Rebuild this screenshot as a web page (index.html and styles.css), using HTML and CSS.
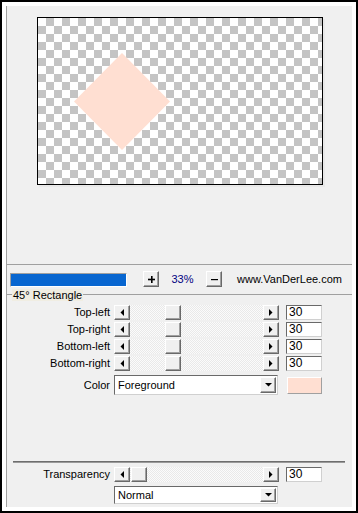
FILE: index.html
```html
<!DOCTYPE html>
<html>
<head>
<meta charset="utf-8">
<link rel="stylesheet" href="styles.css">
</head>
<body>
<div class="window">
  <div class="panel">
    <div class="preview">
      <div class="canvas">
        <svg width="284" height="166" viewBox="0 0 284 166"><polygon points="84,35 132,83.5 84,132 36,83.5" fill="#ffdfd2"/></svg>
      </div>
    </div>
    <div class="toolbar">
      <div class="progress"></div>
      <div class="btn plus"><svg width="7" height="7" viewBox="0 0 7 7"><rect x="3" y="0" width="1.6" height="7" fill="#000"/><rect x="0" y="2.7" width="7" height="1.6" fill="#000"/></svg></div>
      <span class="zoom">33%</span>
      <div class="btn minus"><svg width="7" height="7" viewBox="0 0 7 7"><rect x="0" y="3" width="7" height="1.2" fill="#000"/></svg></div>
      <span class="url">www.VanDerLee.com</span>
    </div>
    <div class="group-head"><span class="group-title">45° Rectangle</span></div>
    <div class="rows">
      <div class="row">
        <span class="lbl">Top-left</span>
        <div class="slider">
          <div class="abtn"><svg width="4" height="7" viewBox="0 0 4 7"><polygon points="4,0 4,7 0.5,3.5" fill="#000"/></svg></div>
          <div class="track"><div class="thumb" style="margin-left:35px"></div></div>
          <div class="abtn"><svg width="4" height="7" viewBox="0 0 4 7"><polygon points="0,0 0,7 3.5,3.5" fill="#000"/></svg></div>
        </div>
        <div class="val">30</div>
      </div>
      <div class="row">
        <span class="lbl">Top-right</span>
        <div class="slider">
          <div class="abtn"><svg width="4" height="7" viewBox="0 0 4 7"><polygon points="4,0 4,7 0.5,3.5" fill="#000"/></svg></div>
          <div class="track"><div class="thumb" style="margin-left:35px"></div></div>
          <div class="abtn"><svg width="4" height="7" viewBox="0 0 4 7"><polygon points="0,0 0,7 3.5,3.5" fill="#000"/></svg></div>
        </div>
        <div class="val">30</div>
      </div>
      <div class="row">
        <span class="lbl">Bottom-left</span>
        <div class="slider">
          <div class="abtn"><svg width="4" height="7" viewBox="0 0 4 7"><polygon points="4,0 4,7 0.5,3.5" fill="#000"/></svg></div>
          <div class="track"><div class="thumb" style="margin-left:35px"></div></div>
          <div class="abtn"><svg width="4" height="7" viewBox="0 0 4 7"><polygon points="0,0 0,7 3.5,3.5" fill="#000"/></svg></div>
        </div>
        <div class="val">30</div>
      </div>
      <div class="row">
        <span class="lbl">Bottom-right</span>
        <div class="slider">
          <div class="abtn"><svg width="4" height="7" viewBox="0 0 4 7"><polygon points="4,0 4,7 0.5,3.5" fill="#000"/></svg></div>
          <div class="track"><div class="thumb" style="margin-left:35px"></div></div>
          <div class="abtn"><svg width="4" height="7" viewBox="0 0 4 7"><polygon points="0,0 0,7 3.5,3.5" fill="#000"/></svg></div>
        </div>
        <div class="val">30</div>
      </div>
    </div>
    <div class="row color-row">
      <span class="lbl">Color</span>
      <div class="combo">
        <span class="combo-text">Foreground</span>
        <div class="dbtn"><svg width="7" height="4" viewBox="0 0 7 4"><polygon points="0,0 7,0 3.5,3.5" fill="#000"/></svg></div>
      </div>
      <div class="swatch"></div>
    </div>
    <div class="sep"></div>
    <div class="row trans-row">
      <span class="lbl">Transparency</span>
      <div class="slider">
        <div class="abtn"><svg width="4" height="7" viewBox="0 0 4 7"><polygon points="4,0 4,7 0.5,3.5" fill="#000"/></svg></div>
        <div class="track"><div class="thumb" style="margin-left:1px"></div></div>
        <div class="abtn"><svg width="4" height="7" viewBox="0 0 4 7"><polygon points="0,0 0,7 3.5,3.5" fill="#000"/></svg></div>
      </div>
      <div class="val">30</div>
    </div>
    <div class="row mode-row">
      <div class="combo small">
        <span class="combo-text">Normal</span>
        <div class="dbtn"><svg width="7" height="4" viewBox="0 0 7 4"><polygon points="0,0 7,0 3.5,3.5" fill="#000"/></svg></div>
      </div>
    </div>
  </div>
</div>
</body>
</html>
```
FILE: styles.css
```css
* { box-sizing: border-box; }
html, body { margin: 0; padding: 0; background: #fff; }
body { font-family: "Liberation Sans", Arial, sans-serif; font-size: 11px; color: #000; }

.window {
  width: 358px; height: 513px;
  border: 2px solid #000;
  padding: 4px;
  background: #fff;
}
.panel {
  height: 501px;
  border-left: 1px solid #a0a0a0;
  background: #f0f0f0;
  display: flex;
  flex-direction: column;
}

.preview {
  flex: none;
  height: 259px;
  border-bottom: 1px solid #a0a0a0;
  padding: 11px 0 0 30px;
}
.canvas {
  width: 286px; height: 168px;
  border: 1px solid #000;
  background: repeating-conic-gradient(#c4c4c4 0 25%, #fff 0 50%) 0 0 / 16px 16px;
  box-shadow: 2px 2px 0 #e8e8e8;
}
.canvas svg { display: block; }

.toolbar {
  flex: none;
  height: 24px;
  display: flex;
  align-items: flex-start;
  padding-top: 6px;
}
.progress {
  width: 117px; height: 14px;
  margin: 2px 0 0 3px;
  background: #0866d0;
  border: 1px solid;
  border-color: #a0a0a0 #fff #fff #a0a0a0;
}
.btn {
  width: 16px; height: 16px;
  display: flex; align-items: center; justify-content: center;
  border: 1px solid;
  border-color: #fff #696969 #696969 #fff;
  box-shadow: inset -1px -1px 0 #a0a0a0;
  background: #f0f0f0;
}
.btn svg { display: block; }
.plus { margin-left: 16px; }
.zoom {
  width: 47px;
  text-align: center;
  color: #000080;
  line-height: 16px;
}
.url { margin-left: 15px; line-height: 16px; }

.group-head {
  flex: none;
  height: 12px;
  display: flex;
}
.group-head::before,
.group-head::after {
  content: "";
  border-top: 1px solid #a0a0a0;
  margin-top: 5px;
}
.group-head::before { width: 5px; }
.group-head::after { flex: 1; }
.group-title {
  background: #f0ede2;
  padding: 0 1px;
  line-height: 12px;
}

.rows {
  flex: none;
  display: flex;
  flex-direction: column;
  gap: 2px;
  margin-top: 4px;
}
.row {
  flex: none;
  display: flex;
  align-items: center;
  height: 15px;
}
.lbl {
  flex: none;
  width: 103px;
  text-align: right;
  line-height: 13px;
}
.slider {
  flex: none;
  display: flex;
  width: 165px;
  height: 15px;
  margin-left: 4px;
}
.abtn, .thumb {
  flex: none;
  width: 16px; height: 15px;
  display: flex; align-items: center; justify-content: center;
  background: #f0f0f0;
  border: 1px solid;
  border-color: #fff #696969 #696969 #fff;
  box-shadow: inset -1px -1px 0 #a0a0a0;
}
.abtn svg { display: block; }
.track {
  flex: 1;
  display: flex;
  background: repeating-conic-gradient(#e9e9e9 0 25%, #fbfbfb 0 50%) 0 0 / 2px 2px;
}
.val {
  flex: none;
  width: 36px; height: 15px;
  margin-left: 7px;
  background: #fff;
  border: 1px solid;
  border-color: #696969 #d0d0d0 #d0d0d0 #696969;
  font-size: 12px;
  line-height: 13px;
  padding-left: 2px;
}

.color-row { height: 20px; margin-top: 4px; }
.combo {
  flex: none;
  display: flex;
  align-items: center;
  width: 164px; height: 20px;
  margin-left: 4px;
  background: #fff;
  border: 1px solid;
  border-color: #696969 #d0d0d0 #d0d0d0 #696969;
  padding: 1px;
}
.combo-text { flex: 1; padding-left: 2px; line-height: 14px; }
.dbtn {
  flex: none;
  width: 16px; height: 100%;
  display: flex; align-items: center; justify-content: center;
  background: #f0f0f0;
  border: 1px solid;
  border-color: #fff #696969 #696969 #fff;
  box-shadow: inset -1px -1px 0 #a0a0a0;
}
.dbtn svg { display: block; }
.swatch {
  flex: none;
  width: 35px; height: 17px;
  margin-left: 9px;
  background: #ffdfd2;
  border: 1px solid;
  border-color: #fff #a0a0a0 #a0a0a0 #fff;
}

.sep {
  flex: none;
  width: 332px;
  height: 2px;
  margin: 66px 0 0 6px;
  border-top: 1px solid #6e6e6e;
  border-bottom: 1px solid #9a9a9a;
}
.trans-row { margin-top: 4px; }
.mode-row { height: 18px; margin-top: 4px; }
.combo.small { height: 18px; margin-left: 107px; }
```
